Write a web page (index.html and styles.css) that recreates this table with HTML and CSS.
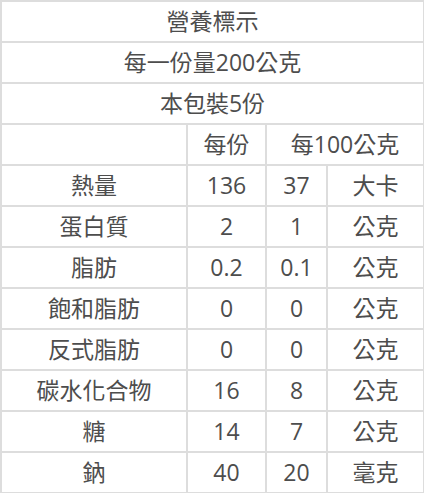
FILE: index.html
```html
<!DOCTYPE html>
<html lang="zh-Hant">
<head>
<meta charset="utf-8">
<title>營養標示</title>
<link rel="stylesheet" href="styles.css">
</head>
<body>
<table class="nutrition">
  <colgroup>
    <col class="c-label"><col class="c-serv"><col class="c-100"><col class="c-unit">
  </colgroup>
  <tr><td colspan="4">營養標示</td></tr>
  <tr><td colspan="4">每一份量200公克</td></tr>
  <tr><td colspan="4">本包裝5份</td></tr>
  <tr><td></td><td>每份</td><td colspan="2">每100公克</td></tr>
  <tr><td>熱量</td><td>136</td><td>37</td><td>大卡</td></tr>
  <tr><td>蛋白質</td><td>2</td><td>1</td><td>公克</td></tr>
  <tr><td>脂肪</td><td>0.2</td><td>0.1</td><td>公克</td></tr>
  <tr><td>飽和脂肪</td><td>0</td><td>0</td><td>公克</td></tr>
  <tr><td>反式脂肪</td><td>0</td><td>0</td><td>公克</td></tr>
  <tr><td>碳水化合物</td><td>16</td><td>8</td><td>公克</td></tr>
  <tr><td>糖</td><td>14</td><td>7</td><td>公克</td></tr>
  <tr><td>鈉</td><td>40</td><td>20</td><td>毫克</td></tr>
</table>
</body>
</html>
```
FILE: styles.css
```css
html, body {
  margin: 0;
  padding: 0;
  background: #fff;
}
.nutrition {
  border-collapse: collapse;
  width: 423px;
  table-layout: fixed;
  font-family: "Open Sans", "Noto Sans CJK TC", sans-serif;
  font-size: 23px;
  font-weight: 400;
  color: #4d4d4d;
  border: 2px solid #ddd;
}
.c-label { width: 186px; }
.c-serv { width: 79px; }
.c-100 { width: 61px; }
.c-unit { width: 97px; }
.nutrition td {
  border: 2px solid #ddd;
  height: 39px;
  padding: 0;
  text-align: center;
  vertical-align: middle;
  line-height: 1;
}
```
